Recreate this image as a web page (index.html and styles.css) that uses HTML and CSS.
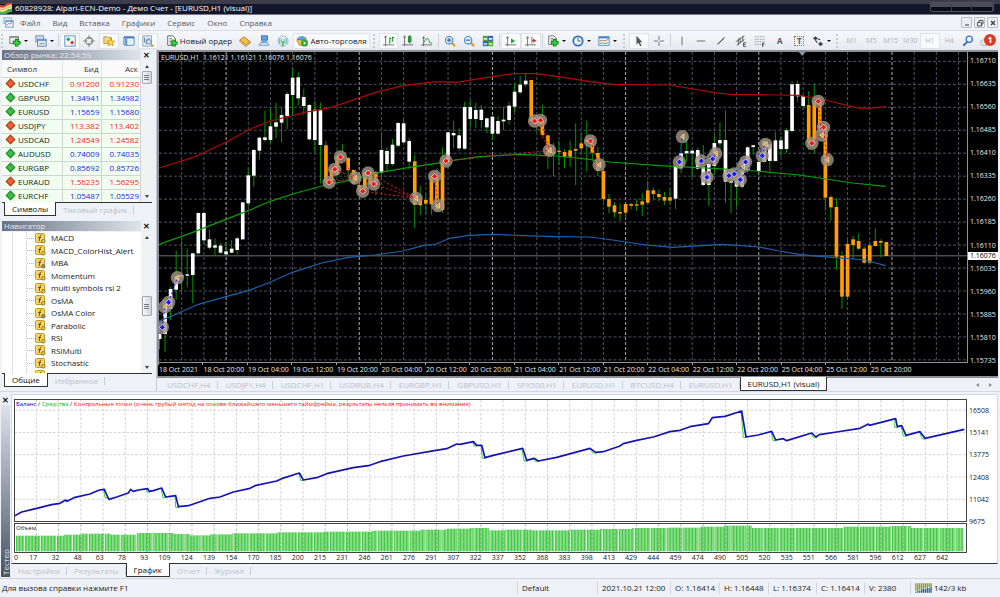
FILE: index.html
```html
<!DOCTYPE html>
<html lang="ru">
<head>
<meta charset="utf-8">
<title>60828928: Alpari-ECN-Demo - Демо Счет - [EURUSD,H1 (visual)]</title>
<link rel="stylesheet" href="styles.css">
</head>
<body>
<header class="titlebar">
  <svg class="logo" viewBox="0 0 12 12"><path d="M0 3Q4 4 6 2T12 1V3Q8 3 6 5T0 6Z" fill="#e33b2e"/><path d="M0 6Q4 7 6 5T12 3V6Q8 6 6 8T0 9Z" fill="#f4c430"/><path d="M0 9Q4 10 6 8T12 6V10Q8 10 6 12H0Z" fill="#4caf3c"/><path d="M0 6Q4 7 6 5T12 3M0 9Q4 10 6 8T12 6" stroke="#fff" fill="none"/></svg>
  <span class="title-text">60828928: Alpari-ECN-Demo - Демо Счет - [EURUSD,H1 (visual)]</span>
  <div class="caption-buttons"><button aria-label="Свернуть"></button><button aria-label="Развернуть"></button><button aria-label="Закрыть"></button></div>
</header>
<nav class="menubar">
  <svg class="menu-icon" viewBox="0 0 12 12"><rect x="1" y="1" width="8" height="6" fill="#e8f2fc" stroke="#7aa9da"/><rect x="3" y="4" width="8" height="7" fill="#fff" stroke="#5b93cf"/><path d="M4 9l2-2 1 1 3-2" stroke="#c55" fill="none"/><path d="M3 5h8" stroke="#5b93cf"/></svg>
  <button>Файл</button><button>Вид</button><button>Вставка</button><button>Графики</button><button>Сервис</button><button>Окно</button><button>Справка</button>
  <div class="mdi"><button aria-label="Свернуть окно"><svg viewBox="0 0 8 8"><path d="M2 6h4" stroke="#555" stroke-width="1.2"/></svg></button><button aria-label="Восстановить окно"><svg viewBox="0 0 8 8"><path d="M3 3V1.5h4V5H5.500M1.500 3.500h4V7h-4z" fill="none" stroke="#555"/></svg></button><button aria-label="Закрыть окно"><svg viewBox="0 0 8 8"><path d="M2 2l4 4M6 2l-4 4" stroke="#444" stroke-width="1.400"/></svg></button></div>
</nav>
<div class="toolbar">
  <i class="grip"></i>
  <div class="group g-52">
    <button class="drop" aria-label="Новый график"><svg viewBox="0 0 14 14"><rect x="1" y="2" width="10" height="8" fill="#f3f8f3" stroke="#666"/><path d="M1 3h10" stroke="#888"/><path d="M3 8l2-2 2 1" stroke="#999" fill="none"/><path d="M9 4.500v9M4.500 9h9" stroke="#0a7a12" stroke-width="4"/><path d="M9 5.500v7M5.500 9h7" stroke="#2fd33a" stroke-width="2.200"/></svg></button>
    <button class="drop" aria-label="Профили"><svg viewBox="0 0 14 14"><rect x="1" y="1" width="9" height="7" fill="#cfe2f6" stroke="#5d83ac"/><rect x="3" y="5" width="10" height="8" fill="#eef5fc" stroke="#4b74a0"/><path d="M3 6.500h10" stroke="#4b86c4"/><path d="M5 10h6" stroke="#9ab" stroke-width="2"/></svg></button>
  </div>
  <i class="sep"></i>
  <div class="group g-98">
    <button class="on" aria-label="Обзор рынка"><svg viewBox="0 0 14 14"><rect x="1" y="1" width="12" height="12" fill="#f5faff" stroke="#4a86c5"/><path d="M5 2.500l2.500 2.500L5 7.500 2.500 5z" fill="#23a839"/><path d="M9.500 6.500L12 9l-2.500 2.500L7 9z" fill="#e03a2a"/></svg></button>
    <button aria-label="Окно данных"><svg viewBox="0 0 14 14"><circle cx="7" cy="7" r="4" fill="none" stroke="#777" stroke-width="1.300"/><path d="M7 0v5M7 9v5M0 7h5M9 7h5" stroke="#777"/></svg></button>
    <button class="on" aria-label="Навигатор"><svg viewBox="0 0 14 14"><path d="M1 2h4l1 1h4v7H1z" fill="#f6d67c" stroke="#b8903a"/><path d="M9 4l1.400 3 3.200.3-2.400 2.200.7 3.200L9 11l-2.900 1.700.7-3.200-2.400-2.200 3.200-.3z" fill="#ffd740" stroke="#b88a14" stroke-width=".8"/></svg></button>
    <button aria-label="Терминал"><svg viewBox="0 0 14 14"><rect x="1" y="2" width="12" height="10" rx="1" fill="#f4f9ff" stroke="#4a80b8"/><path d="M1 3h12" stroke="#4a80b8" stroke-width="2"/><rect x="2" y="4" width="3" height="8" fill="#5f9ad6"/><path d="M6 6h6M6 8h6M6 10h6" stroke="#c9d6e4" stroke-width=".6"/></svg></button>
    <button class="on" aria-label="Тестер стратегий"><svg viewBox="0 0 14 14"><rect x="1" y="1" width="10" height="12" fill="#eaf2fa" stroke="#7b9dc0"/><path d="M3 3v6M5 5v6M7 3v5M9 4v4" stroke="#5a6c80"/><circle cx="8" cy="8" r="2.500" fill="#d8ebfb" stroke="#5b8cc0"/><path d="M10 10l3.500 3.500" stroke="#d3a02a" stroke-width="2"/></svg></button>
  </div>
  <i class="gap"></i>
  <button class="text-btn order"><svg viewBox="0 0 14 14"><path d="M2 1h6l3 3v8H2z" fill="#fbfbfb" stroke="#555"/><path d="M4 4h3M4 6h5M4 8h3" stroke="#777"/><path d="M9.500 5.500v8M5.500 9.500h8" stroke="#0a7a12" stroke-width="4"/><path d="M9.500 6.200v6.600M6.200 9.500h6.600" stroke="#2fd33a" stroke-width="2.200"/></svg>Новый ордер</button>
  <div class="group g-58">
    <button aria-label="Метаредактор"><svg viewBox="0 0 14 14"><path d="M1 6l5-4 7 6-5 4z" fill="#f3c04a" stroke="#a87518"/><path d="M1 6v2l7 5.500 5-4V8l-5 4z" fill="#fff4d0" stroke="#a87518" stroke-width=".8"/></svg></button>
    <button aria-label="MQL5.community"><svg viewBox="0 0 14 14"><rect x="4" y="1" width="7" height="5" fill="#59a5ea" stroke="#346fa8"/><path d="M1 12q1-4 6-4t6 4z" fill="#cfe3f6" stroke="#6b9ac8"/><path d="M4 8h7" stroke="#3d85cc"/></svg></button>
    <button aria-label="Сигналы"><svg viewBox="0 0 14 14"><circle cx="7" cy="7" r="6" fill="#dceef8" stroke="#a6bfcf"/><path d="M4 3.500a5 5 0 000 7M10 3.500a5 5 0 010 7" fill="none" stroke="#6b9ab8" stroke-width="1.200"/><path d="M5.500 5a3 3 0 000 4M8.500 5a3 3 0 010 4" fill="none" stroke="#39a845"/><path d="M7 7v6" stroke="#39a845" stroke-width="1.600"/></svg></button>
  </div>
  <button class="text-btn auto"><svg viewBox="0 0 14 14"><path d="M1 6l6-3 6 3-2 6H4z" fill="#f4c542" stroke="#b98a1a"/><path d="M1 5q5-6 11-1l-5 2z" fill="#5aa9e6" stroke="#3373aa" stroke-width=".7"/><circle cx="10" cy="9.500" r="4" fill="#25a93a"/><path d="M9 7.500l3 2-3 2z" fill="#fff"/></svg>Авто-торговля</button>
  <i class="grip"></i>
  <div class="group g-58">
    <button class="on" aria-label="Бары"><svg viewBox="0 0 14 14"><path d="M3 1v12M0 11.500h13M1.500 3L3 1l1.500 2" fill="none" stroke="#666"/><path d="M8 3v7M8 9H6.500M11 2v6M11 3h2M8 4h1.500" stroke="#239b2f" stroke-width="1.300"/></svg></button>
    <button aria-label="Свечи"><svg viewBox="0 0 14 14"><path d="M3 1v12M0 11.500h13M1.500 3L3 1l1.500 2" fill="none" stroke="#666"/><path d="M9 0v10" stroke="#187b22"/><rect x="7.500" y="2" width="3" height="6" fill="#22b833" stroke="#187b22"/></svg></button>
    <button aria-label="Линия"><svg viewBox="0 0 14 14"><path d="M3 2v11M0 11.500h13M1.500 4L3 2l1.500 2" fill="none" stroke="#666"/><path d="M3 9q4-8 6-3t4 3" fill="none" stroke="#46a350" stroke-width="1.200"/></svg></button>
  </div>
  <i class="sep"></i>
  <div class="group g-58">
    <button aria-label="Увеличить"><svg viewBox="0 0 14 14"><path d="M8 8l5 5" stroke="#d9a62b" stroke-width="2.600"/><circle cx="6" cy="6" r="4.300" fill="#e6f3fd" stroke="#4c86c2" stroke-width="1.300"/><path d="M6 3.500v5M3.500 6h5" stroke="#2c6db3" stroke-width="1.500"/></svg></button>
    <button aria-label="Уменьшить"><svg viewBox="0 0 14 14"><path d="M8 8l5 5" stroke="#d9a62b" stroke-width="2.600"/><circle cx="6" cy="6" r="4.300" fill="#e6f3fd" stroke="#4c86c2" stroke-width="1.300"/><path d="M3.500 6h5" stroke="#2c6db3" stroke-width="1.500"/></svg></button>
    <button aria-label="Окна плиткой"><svg viewBox="0 0 14 14"><rect x="1" y="1" width="6" height="6" fill="#49a828"/><rect x="7" y="1" width="6" height="6" fill="#2e67bd"/><rect x="1" y="7" width="6" height="6" fill="#2e67bd"/><rect x="7" y="7" width="6" height="6" fill="#49a828"/><path d="M2 4.500h4M8 4.500h4M2 10.500h4M8 10.500h4" stroke="#e4f2dc" stroke-width="2"/></svg></button>
  </div>
  <i class="sep"></i>
  <div class="group g-40">
    <button class="on" aria-label="Автопрокрутка"><svg viewBox="0 0 14 14"><path d="M3 2v11M0 11.500h13M1.500 4L3 2l1.500 2" fill="none" stroke="#666"/><path d="M7 4l5 3-5 3z" fill="#23a52f"/></svg></button>
    <button class="on" aria-label="Сдвиг графика"><svg viewBox="0 0 14 14"><path d="M3 2v11M0 11.500h13M1.500 4L3 2l1.500 2M8 2v8" fill="none" stroke="#666"/><path d="M13 6.500H9M11 4.500l-2 2 2 2" fill="none" stroke="#b5452d" stroke-width="1.400"/></svg></button>
  </div>
  <i class="sep"></i>
  <div class="group g-76">
    <button class="drop" aria-label="Индикаторы"><svg viewBox="0 0 14 14"><path d="M2 1h6l3 3v7H2z" fill="#f7f7f7" stroke="#666"/><path d="M4 4h3M4 6h4" stroke="#777"/><path d="M9 4.500v9M4.500 9h9" stroke="#0a7a12" stroke-width="4"/><path d="M9 5.500v7M5.500 9h7" stroke="#2fd33a" stroke-width="2.200"/></svg></button>
    <button class="drop" aria-label="Периоды"><svg viewBox="0 0 14 14"><circle cx="7" cy="7" r="5.500" fill="#e8f3fd" stroke="#2d6fb7" stroke-width="2"/><path d="M7 3.500V7h3" fill="none" stroke="#444"/></svg></button>
    <button class="drop" aria-label="Шаблоны"><svg viewBox="0 0 14 14"><rect x="1" y="2" width="12" height="10" fill="#f7fbff" stroke="#4a80b8"/><path d="M1 3h12" stroke="#4a86c6" stroke-width="2"/><path d="M2 7l3-1 3 1 4-2" fill="none" stroke="#c0503c"/><path d="M2 10l3-1 3 1 4-1" fill="none" stroke="#3b9a49"/></svg></button>
  </div>
  <i class="grip"></i>
  <div class="group g-40">
    <button class="on" aria-label="Курсор"><svg viewBox="0 0 14 14"><path d="M4 1v10l2.300-2 2 4 1.600-.8L8 8.500h3z" fill="#555"/></svg></button>
    <button aria-label="Перекрестие"><svg viewBox="0 0 14 14"><path d="M7 1v5M7 8v5M1 7h5M8 7h5" stroke="#666"/></svg></button>
  </div>
  <i class="sep"></i>
  <div class="group g-137">
    <button aria-label="Вертикальная линия"><svg viewBox="0 0 14 14"><path d="M7 2v10" stroke="#555"/></svg></button>
    <button aria-label="Горизонтальная линия"><svg viewBox="0 0 14 14"><path d="M2 7h10" stroke="#555"/></svg></button>
    <button aria-label="Трендовая линия"><svg viewBox="0 0 14 14"><path d="M3 11l8-8" stroke="#555" stroke-width="1.300"/></svg></button>
    <button aria-label="Канал"><svg viewBox="0 0 14 14"><path d="M1 8L11 1M2 12L11 5M4 4v8M6 3v7M9 1v7" stroke="#555"/><path d="M13 9h-3v4.500h3M10 11h2.500" fill="none" stroke="#444"/></svg></button>
    <button aria-label="Фибоначчи"><svg viewBox="0 0 14 14"><path d="M1 2h12M1 5h12M1 8h12M1 11h7" stroke="#777" stroke-dasharray="1 1"/><path d="M12.500 9.500h-2.500V14M10 11.500h2" fill="none" stroke="#444"/></svg></button>
    <button class="letter">A</button>
    <button class="letter"><span class="boxed">T</span></button>
  </div>
  <button class="drop" aria-label="Стрелки"><svg viewBox="0 0 14 14"><path d="M1 4l3-2.500L7 4 4 6zM7 10.500l3-2.500 3 2.500-3 2.500z" fill="#444"/><path d="M4 6l2 3M7 4.500l2.500 1" stroke="#444" stroke-width="1.400"/></svg></button>
  <i class="grip"></i>
  <div class="group g-117 periods"><button>M1</button><button>M5</button><button>M15</button><button>M30</button><button class="on">H1</button><button>H4</button></div>
  <button class="tail" aria-label="Поиск"><svg viewBox="0 0 14 14"><path d="M6 8l-4.500 4.500" stroke="#3a72cf" stroke-width="2.400"/><circle cx="8.500" cy="5" r="3.600" fill="#f0f6ff" stroke="#3a72cf" stroke-width="1.500"/></svg></button>
  <button class="tail chat" aria-label="Уведомления"><svg viewBox="0 0 14 14"><ellipse cx="5" cy="9" rx="4.500" ry="3.500" fill="#e4e6ea" stroke="#aaaeb5"/></svg><b class="badge">1</b></button>
</div>

<main class="workspace">
  <aside class="side">
    <section class="watch">
      <h2><span>Обзор рынка: 22:54:59</span><button aria-label="Закрыть обзор рынка">✕</button></h2>
      <div class="scroll-row">
        <table>
          <thead><tr><th>Символ</th><th>Бид</th><th>Аск</th></tr></thead>
          <tbody>
            <tr class="down"><td>USDCHF</td><td>0.91200</td><td>0.91230</td></tr>
            <tr class="up"><td>GBPUSD</td><td>1.34941</td><td>1.34982</td></tr>
            <tr class="up"><td>EURUSD</td><td>1.15659</td><td>1.15680</td></tr>
            <tr class="down"><td>USDJPY</td><td>113.382</td><td>113.402</td></tr>
            <tr class="down"><td>USDCAD</td><td>1.24549</td><td>1.24582</td></tr>
            <tr class="up"><td>AUDUSD</td><td>0.74009</td><td>0.74035</td></tr>
            <tr class="up"><td>EURGBP</td><td>0.85692</td><td>0.85726</td></tr>
            <tr class="down"><td>EURAUD</td><td>1.56235</td><td>1.56295</td></tr>
            <tr class="up"><td>EURCHF</td><td>1.05487</td><td>1.05529</td></tr>
          </tbody>
        </table>
        <div class="scrollbar at-top"><i class="arrow-up"></i><i class="thumb"></i><i class="arrow-down"></i></div>
      </div>
      <div class="tabs"><button class="active">Символы</button><button>Тиковый график</button></div>
    </section>
    <section class="navigator">
      <h2><span>Навигатор</span><button aria-label="Закрыть навигатор">✕</button></h2>
      <div class="scroll-row">
        <ul>
          <li>MACD</li><li>MACD_ColorHist_Alert</li><li class="locked">MBA</li><li>Momentum</li><li>multi symbols rsi 2</li><li>OsMA</li><li class="locked">OsMA Color</li><li>Parabolic</li><li>RSI</li><li>RSIMulti</li><li>Stochastic</li><li></li>
        </ul>
        <div class="scrollbar at-middle"><i class="arrow-up"></i><i class="thumb"></i><i class="arrow-down"></i></div>
      </div>
      <div class="tabs"><button class="active">Общие</button><button>Избранное</button></div>
    </section>
  </aside>
  <section class="chart-pane">
    <div class="chart">
      <div class="chart-body">
        <div class="plot">
          <svg id="price" viewBox="0 -24 2427 930" preserveAspectRatio="none" role="img" aria-label="EURUSD,H1"></svg>
          <span class="ohlc">EURUSD,H1&nbsp; 1.16121 1.16121 1.16076 1.16076</span>
        </div>
        <div class="time-axis" id="times"></div>
      </div>
      <div class="price-axis">
        <span>1.16710</span><span>1.16635</span><span>1.16560</span><span>1.16485</span><span>1.16410</span><span>1.16335</span><span>1.16260</span><span>1.16185</span><span>1.16110</span><span>1.16035</span><span>1.15960</span><span>1.15885</span><span>1.15810</span><span>1.15735</span>
        <b class="price-tag">1.16076</b>
      </div>
    </div>
    <div class="tabs chart-tabs"><button>USDCHF,H4</button><button>USDJPY,H4</button><button>USDCHF,H1</button><button>USDRUB,H4</button><button>EURGBP,H1</button><button>GBPUSD,H1</button><button>SPX500,H1</button><button>EURUSD,H1</button><button>BTCUSD,H4</button><button>EURUSD,H1</button><button class="active">EURUSD,H1 (visual)</button><span class="tab-arrows"><i class="arrow-left"></i><i class="arrow-right"></i></span></div>
  </section>
</main>

<section class="tester">
  <div class="tester-strip"><button aria-label="Закрыть тестер">✕</button><span>Тестер</span></div>
  <div class="tester-main">
    <div class="tester-chart">
      <div class="tester-plots">
        <div class="balance">
          <svg id="balance" viewBox="3 27 2853 363" preserveAspectRatio="none" role="img" aria-label="Баланс"></svg>
          <p class="legend"><span class="c-blue">Баланс</span> / <span class="c-green">Средства</span> / <span class="c-red">Контрольные точки (очень грубый метод на основе ближайшего меньшего таймфрейма, результаты нельзя принимать во внимание)</span></p>
        </div>
        <div class="volume">
          <svg id="volume" viewBox="3 400 2853 84" preserveAspectRatio="none" role="img" aria-label="Объем"></svg>
          <p class="legend">Объем</p>
        </div>
        <div class="trade-axis" id="trades"></div>
      </div>
      <div class="money-axis"><span>16508</span><span>15141</span><span>13775</span><span>12408</span><span>11042</span><span>9675</span></div>
    </div>
    <div class="tabs tester-tabs"><button>Настройки</button><button>Результаты</button><button class="active">График</button><button>Отчет</button><button>Журнал</button></div>
  </div>
</section>

<footer class="status">
  <span class="help">Для вызова справки нажмите F1</span><span class="s-80">Default</span><span class="s-73">2021.10.21 12:00</span><span class="s-49">O: 1.16414</span><span class="s-49">H: 1.16448</span><span class="s-48">L: 1.16374</span><span class="s-48">C: 1.16414</span><span class="s-46">V: 2380</span>
  <span class="traffic"><svg viewBox="0 0 18 10"><path d="M1 0v8M3 0v8M5 0v7M7 0v7M9 0v6M11 0v5M13 0v5M15 0v4M17 0v4" stroke="#8a9a2b" stroke-width="1.400"/><path d="M1 10V9M3 10V8M5 10V8M7 10V7M9 10V6M11 10V6M13 10V5M15 10V5M17 10V4" stroke="#23618c" stroke-width="1.400"/></svg>142/3 kb</span>
</footer>
<script src="charts.js"></script>
</body>
</html>
```
FILE: styles.css
```css
* { box-sizing: border-box; }
body {
  margin: 0;
  min-height: 100vh;
  display: flex;
  flex-direction: column;
  background: #eef1f7;
  color: #1a1a1a;
  font-family: "Open Sans", "Noto Sans", sans-serif;
  font-size: 8px;
  line-height: 12px;
  overflow: hidden;
}
button {
  font: inherit;
  color: inherit;
  background: none;
  border: 0;
  padding: 0;
  margin: 0;
  white-space: nowrap;
}
h2, p, ul { margin: 0; padding: 0; font: inherit; }
svg { display: block; }

.titlebar {
  flex: none;
  height: 15px;
  display: flex;
  align-items: center;
  background: linear-gradient(#3c3d4a 0 4px, #14172a 4px 14px, #777b88 14px);
  color: #fff;
}
.logo { width: 12px; height: 12px; }
.title-text { margin-left: 3px; flex: 1; }
.caption-buttons {
  display: flex;
  align-self: flex-start;
  width: 64px;
  height: 10px;
  margin: 2px 6px 0 0;
  border: 1px solid #50535f;
  border-radius: 2px;
  background: linear-gradient(#4a4c5a 0 4px, #0c0e1a 4px);
}
.caption-buttons button { flex: 1; border-right: 1px solid #3c3f50; }

.menubar {
  flex: none;
  height: 15px;
  display: flex;
  align-items: center;
  background: #f0f3f9;
  color: #5a5a5a;
  padding-left: 3px;
}
.menu-icon { width: 11px; height: 11px; margin-right: 6px; }
.menubar > button { margin-right: 12px; }
.mdi { margin-left: auto; display: flex; gap: 2px; padding-right: 2px; }
.mdi button { width: 11px; height: 11px; border: 1px solid #b9bcc3; border-radius: 1px; background: #eceef2; display: grid; place-items: center; }
.mdi svg { width: 8px; height: 8px; }

.toolbar {
  flex: none;
  height: 20px;
  display: flex;
  align-items: center;
  background: linear-gradient(#f6f8fb, #e6e9f0);
  border-top: 1px solid #d9dce3;
}
.toolbar svg { width: 12px; height: 12px; flex: none; }
.toolbar button { height: 16px; display: flex; align-items: center; justify-content: center; border: 1px solid transparent; }
.toolbar .on, .toolbar .auto { background: #f8fafc; border-color: #dfe2e8; }
.group { display: flex; flex: none; }
.group button { flex: 1 1 0; min-width: 0; }
.g-40 { width: 40px; }
.g-52 { width: 52px; }
.g-58 { width: 58px; }
.g-76 { width: 76px; }
.g-98 { width: 98px; }
.g-117 { width: 117px; }
.g-137 { width: 137px; }
.grip { flex: none; width: 3px; height: 14px; margin: 0 3px; border-left: 2px dotted #c6cad2; }
.toolbar > .grip:first-child { margin: 0 1px; }
.sep { flex: none; width: 1px; height: 13px; margin: 0 1px; background: #cdd1d9; }
.gap { flex: none; width: 5px; }
.toolbar .drop { gap: 3px; width: 24px; }
.drop::after { content: ""; border: 2px solid transparent; border-top-color: #111; border-bottom: 0; }
.toolbar .text-btn { gap: 2px; }
.toolbar .order { width: 72px; }
.toolbar .auto { width: 77px; }
.toolbar .letter { font-weight: 700; color: #555; }
.boxed { width: 10px; line-height: 8px; border: 1px dotted #777; }
.periods { color: #b0b3ba; font-size: 7px; }
.toolbar .tail { width: 18px; flex: none; }
.toolbar .chat { position: relative; }
.badge {
  position: absolute;
  top: 0;
  left: 6px;
  width: 12px;
  height: 12px;
  border-radius: 6px;
  background: #dd3a25;
  color: #fff;
  font-size: 9px;
  line-height: 12px;
  text-align: center;
}

.workspace { flex: 1; display: flex; min-height: 341px; }
.side { flex: none; width: 157px; padding: 0 4px 0 2px; display: flex; flex-direction: column; gap: 5px; border-right: 1px solid #c5c9d1; }
.side h2 { display: flex; height: 10px; line-height: 10px; color: #e3e6ec; margin-bottom: 1px; }
.side h2 span { flex: 1; padding-left: 2px; background: linear-gradient(90deg, #6a7384, #dfe4ec); }
.side h2 button { width: 11px; color: #111; font-weight: 700; line-height: 10px; }
.scroll-row { display: flex; background: #fff; border-bottom: 1px solid #333; overflow: hidden; }
.watch .scroll-row { height: 142px; }
.navigator .scroll-row { height: 142px; }

table { flex: 1; border-collapse: collapse; table-layout: fixed; }
th { height: 16px; padding: 0 2px; font-weight: 400; text-align: right; background: #fafafa; color: #333; border-right: 1px solid #e3e5e8; border-bottom: 1px solid #cfd4d0; }
th:first-child { width: 60px; text-align: left; padding-left: 5px; }
th:nth-child(2) { width: 39px; }
td { height: 14px; padding: 0 1px; text-align: right; background: #f0fff0; border-right: 1px solid #cfd4d0; border-bottom: 1px solid #cfd4d0; }
tr td:first-child { text-align: left; white-space: nowrap; color: #222; }
td:first-child::before { content: ""; display: inline-block; width: 5px; height: 5px; margin: 0 4px 0 4px; transform: rotate(45deg); vertical-align: 0; }
.up td { color: #2323ee; }
.down td { color: #f22; }
.up td:first-child::before { background: #3dbb4a; border: 1px solid #23862e; }
.down td:first-child::before { background: #e8623a; border: 1px solid #b03d1c; }

.scrollbar { flex: none; width: 11px; display: flex; flex-direction: column; align-items: center; background: #f1f2f4; padding: 4px 0; }
.thumb { width: 10px; border: 1px solid #a5a8ae; border-radius: 1px; background: repeating-linear-gradient(#777 0 1px, transparent 1px 2px) center / 5px 5px no-repeat, linear-gradient(90deg, #f6f6f7, #d2d4d8); }
.at-top .thumb { height: 13px; margin: 3px 0 auto; }
.at-middle .thumb { height: 20px; margin: 57px 0 auto; }
.arrow-up, .arrow-down, .arrow-left, .arrow-right { border: 3px solid transparent; }
.arrow-up { border-bottom-color: #444; border-width: 0 2px 3px; }
.arrow-down { border-top-color: #444; border-width: 3px 2px 0; }
.arrow-left { border-right-color: #8b8f98; border-width: 2px 3px 2px 0; }
.arrow-right { border-left-color: #8b8f98; border-width: 2px 0 2px 3px; }

.navigator ul { flex: 1; list-style: none; background: repeating-linear-gradient(#c8c8c8 0 1px, transparent 1px 2px) 10px 0 / 1px 100% no-repeat, repeating-linear-gradient(#c8c8c8 0 1px, transparent 1px 2px) 24px 0 / 1px 100% no-repeat; }
.navigator li { display: flex; align-items: center; height: 12px; padding-left: 25px; line-height: 12px; }
.navigator li:nth-child(even) { height: 13px; }
.navigator li::before { content: ""; width: 7px; border-top: 1px dotted #bbb; margin-right: 1px; }
.navigator li svg { width: 11px; height: 11px; margin-right: 5px; }

.tabs { display: flex; align-items: stretch; height: 13px; color: #bcc0ca; }
.tabs button { position: relative; }
.tabs button:not(.active)::after { content: ""; position: absolute; right: 0; top: 3px; height: 8px; border-right: 1px solid #c9cdd5; }
.tabs .active { color: #111; background: #fff; border: 1px solid #333; border-top: 0; margin-top: -1px; }
.side .tabs { padding-left: 2px; }
.side .tabs button { padding: 0 7px; }

.chart-pane { flex: 1; min-width: 0; display: flex; flex-direction: column; padding-right: 2px; }
.chart { display: flex; background: #000; border: solid #8d8f94; border-width: 2px 0 2px 1px; color: #e8e8e8; font-size: 7px; line-height: 9px; height: 328px; }
.chart-body { flex: 1; min-width: 0; display: flex; flex-direction: column; }
.plot { position: relative; border: solid #909296; border-width: 0 1px 1px 1px; }
.plot svg { width: 100%; height: 310px; }
.ohlc { position: absolute; left: 2px; top: 1px; white-space: nowrap; }
.time-axis { display: flex; white-space: nowrap; }
.time-axis span { width: 5.493%; flex: none; border-left: 1px solid #aaa; height: 2px; padding-top: 2px; }
.price-axis { flex: none; width: 30px; height: 313px; padding: 4px 0 0 2px; position: relative; display: flex; flex-direction: column; justify-content: space-between; }
.price-tag { position: absolute; left: 0; right: 0; top: 200px; height: 8px; line-height: 8px; padding-left: 2px; background: #fff; color: #000; font-weight: 400; }
.chart-tabs { padding-left: 2px; }
.chart-tabs button { padding: 0 7px 0 8px; }
.chart-tabs .active { padding: 0 7px; }
.tab-arrows { margin-left: auto; display: flex; align-items: center; gap: 10px; padding-right: 6px; }

.tester { flex: none; height: 188px; display: flex; padding: 2px 2px 0 1px; border-top: 1px solid #d5d8df; border-bottom: 1px solid #cfd3da; }
.tester-strip { flex: none; width: 9px; display: flex; flex-direction: column; margin-right: 1px; }
.tester-strip button { height: 11px; line-height: 11px; font-weight: 700; color: #111; }
.tester-strip span { flex: 1; margin-bottom: 1px; writing-mode: vertical-rl; rotate: 180deg; text-align: left; line-height: 9px; padding-top: 2px; color: #dfe2e8; background: linear-gradient(#4a5365, #dde2ea); }
.tester-main { flex: 1; min-width: 0; }
.tester-chart { display: flex; height: 170px; background: #fff; border: 1px solid #d5d8df; border-bottom: 1px solid #333; padding: 4px 0 0 2px; font-size: 7px; line-height: 9px; }
.tester-plots { flex: 1; min-width: 0; }
.balance, .volume { position: relative; border: 1px solid #444; }
.balance svg { width: 100%; height: 121px; }
.volume { margin-top: 1px; }
.volume svg { width: 100%; height: 28px; }
.legend { position: absolute; left: 1px; top: 0; white-space: nowrap; font-size: 6px; color: #222; }
.c-blue { color: #0000c0; }
.c-green { color: #0ab80a; }
.c-red { color: #f11; }
.trade-axis { display: flex; }
.trade-axis span { flex: none; width: 2.332%; text-align: right; }
.trade-axis span:first-child { width: 1px; }
.money-axis { flex: none; width: 30px; height: 127px; padding: 7px 0 0 2px; display: flex; flex-direction: column; justify-content: space-between; }
.tester-tabs button { padding: 0 7px; }

.status { flex: none; height: 18px; display: flex; align-items: center; padding: 0 2px; }
.status span { flex: none; border-left: 1px solid #d3d6dd; padding-left: 4px; white-space: nowrap; }
.status .help { flex: 1; border: 0; padding: 0; }
.s-80 { width: 80px; }
.s-73 { width: 73px; }
.s-49 { width: 49px; }
.s-48 { width: 48px; }
.s-46 { width: 46px; }
.status .traffic { display: flex; align-items: center; gap: 2px; width: 88px; border-left: 1px solid #d3d6dd; }
.traffic svg { width: 17px; height: 10px; }
```
FILE: charts.js
```javascript
const NS = "http://www.w3.org/2000/svg";

function add(svg, tag, attrs) {
  const el = document.createElementNS(NS, tag);
  for (const k in attrs) el.setAttribute(k, attrs[k]);
  svg.appendChild(el);
  return el;
}

// Indicator icons in the navigator tree
document.querySelectorAll(".navigator li").forEach((li) => {
  const svg = document.createElementNS(NS, "svg");
  svg.setAttribute("viewBox", "0 0 11 11");
  const gear = li.classList.contains("locked") ? "#888" : "#f3c63a";
  add(svg, "rect", { x: 0.5, y: 0.5, width: 9, height: 9, rx: 1, fill: "#f5d469", stroke: "#c39a2c" });
  add(svg, "path", { d: "M6.500 2Q5 2 4.800 4L4.200 8M3.200 4.500H6", fill: "none", stroke: "#6b5210", "stroke-width": 1 });
  add(svg, "circle", { cx: 8.3, cy: 8.3, r: 1.8, fill: gear, stroke: "#7a6a30", "stroke-width": 0.8 });
  li.prepend(svg);
});

// Candles: high, body top, body bottom, low
const candles = [
  [795,822,837,868],[730,740,822,875],[680,687,747,780],[572,648,689,720],[535,645,650,695],[565,643,647,682],[578,580,645,730],[457,459,580,584],[455,459,541,552],[510,538,563,568],
  [535,556,563,585],[550,557,578,582],[545,574,583,588],[540,566,578,580],[530,535,570,583],[427,427,538,538],[323,346,430,440],[267,270,347,380],[230,233,272,300],[153,232,240,245],
  [147,199,240,250],[128,187,200,235],[142,165,188,248],[95,102,168,207],[23,53,105,165],[37,52,115,137],[86,111,138,165],[132,135,238,241],[123,149,240,277],[128,151,255,370],
  [243,256,365,370],[322,330,370,375],[270,290,345,350],[252,288,294,296],[290,294,331,355],[328,330,371,375],[345,375,392,398],[330,338,388,398],[325,335,372,375],[332,336,376,405],
  [218,270,338,360],[262,273,312,335],[237,254,312,317],[186,189,257,263],[180,190,247,250],[234,243,305,327],[285,304,435,505],[378,417,436,465],[400,420,431,463],[343,348,433,465],
  [325,350,448,455],[262,306,450,458],[215,217,306,325],[182,219,226,265],[205,226,265,272],[125,141,266,270],[120,141,177,200],[128,150,177,205],[135,149,180,205],[172,175,202,220],
  [168,170,221,240],[168,183,221,224],[140,179,184,210],[125,137,180,193],[70,95,140,157],[48,74,97,102],[40,62,73,80],[60,60,183,183],[165,180,188,215],[135,180,225,230],
  [224,226,285,327],[248,275,283,348],[243,272,275,315],[268,276,291,325],[243,271,290,320],[190,267,272,375],[220,250,265,283],[182,240,247,335],[225,250,278,305],[260,279,333,348],
  [330,333,417,425],[402,417,440,460],[427,436,457,473],[430,456,461,483],[430,432,458,475],[429,432,437,448],[418,433,437,453],[398,424,434,468],[363,391,428,433],[383,391,402,422],
  [388,402,411,425],[396,411,422,435],[387,412,422,430],[318,320,416,447],[250,280,325,340],[230,273,280,305],[270,272,280,352],[262,270,326,330],[255,321,375,378],[290,312,375,438],
  [225,249,318,345],[188,240,250,275],[150,240,365,428],[345,363,368,460],[330,362,380,440],[310,330,380,385],[258,262,330,338],[254,256,261,285],[290,306,333,335],[235,243,306,308],
  [250,253,303,335],[215,241,303,305],[228,241,267,290],[205,211,267,278],[63,73,213,217],[62,72,109,125],[105,108,138,150],[93,135,247,270],[70,125,248,280],[105,128,205,240],
  [185,202,413,452],[406,411,442,482],[415,441,590,630],[573,588,710,747],[536,552,710,717],[528,538,555,600],[520,543,566,570],[560,566,608,613],[545,556,608,612],[505,543,558,560],
  [538,543,548,592],[546,546,588,588]
];
const isFalling = (i) => (i >= 30 && i <= 39) || (i >= 46 && i <= 51) || (i >= 67 && i <= 92) || i >= 117;

const averages = {
  "#b00808": "0,324 101,293 201,247 268,210 334,183 401,167 434,158 518,142 648,98 733,77 833,65 893,67 1001,50 1063,41 1133,41 1213,52 1293,65 1363,73 1533,75 1663,97 1713,103 1863,105 1923,106 2013,123 2093,143 2133,145 2183,140",
  "#05a005": "0,553 101,517 201,478 268,452 334,424 401,402 501,375 588,358 663,337 753,322 833,310 883,301 963,290 1083,283 1193,288 1283,297 1353,306 1503,317 1663,325 1793,333 1923,345 2003,357 2083,369 2183,379",
  "#1c62b0": "0,783 34,770 118,733 201,710 268,692 334,667 401,637 488,609 568,592 648,585 733,573 793,557 833,552 873,535 933,526 1003,523 1093,527 1193,530 1293,531 1363,540 1463,555 1543,562 1693,553 1803,561 1863,573 1923,583 1993,590 2123,600 2153,609 2183,617"
};

const trades = [
  [10,802,"b"],[18,740,"y"],[29,727,"b"],[55,653,"y"],[511,367,"r"],[528,328,"r"],[545,291,"r"],[589,354,"y"],[612,394,"r"],[628,339,"r"],[645,372,"r"],
  [772,415,"y"],[828,349,"r"],[838,437,"y"],[862,303,"r"],[1128,183,"r"],[1146,181,"r"],[1173,271,"y"],
  [1296,243,"r"],[1322,314,"y"],[1572,230,"y"],[1563,306,"b"],[1629,303,"b"],[1646,352,"b"],[1663,297,"b"],[1672,281,"y"],[1712,347,"b"],[1728,342,"b"],[1746,359,"b"],[1754,320,"y"],[1762,306,"b"],[1812,287,"b"],[1822,253,"y"],
  [1980,124,"r"],[1961,250,"r"],[1990,225,"y"],[1996,202,"r"],[2007,299,"y"]
];
const links = [
  [511,367,589,354,"r"],[528,328,589,354,"r"],[545,291,589,354,"r"],[612,394,772,415,"r"],[628,339,772,415,"r"],[645,372,772,415,"r"],[828,349,838,437,"r"],[862,303,1173,271,"r"],
  [1128,183,1173,271,"r"],[1146,181,1173,271,"r"],[1296,243,1322,314,"r"],[1980,124,1990,225,"r"],[1996,202,2007,299,"r"],[1961,250,1990,225,"r"],
  [10,802,18,740,"b"],[29,727,55,653,"b"],[1563,306,1572,230,"b"],[1629,303,1672,281,"b"],[1646,352,1672,281,"b"],[1712,347,1754,320,"b"],[1746,359,1822,253,"b"],[1812,287,1822,253,"b"]
];

const price = document.getElementById("price");
for (let k = 1; k <= 36; k++) {
  const x = 1.5 + k * 66.67;
  add(price, "path", { d: `M${x} -24V906`, stroke: k % 6 === 3 ? "#a9b0b6" : "#4b5560", "stroke-width": 3, "stroke-dasharray": "9 6" });
}
for (let k = 0; k < 14; k++) {
  add(price, "path", { d: `M0 ${4 + k * 68.9}H2427`, stroke: "#4b5560", "stroke-width": 3, "stroke-dasharray": "9 6" });
}
add(price, "path", { d: "M0 587.500H2427", stroke: "#6a737b", "stroke-width": 3 });
candles.forEach(([high, top, bottom, low], i) => {
  const x = 1.5 + i * 16.667;
  add(price, "path", { d: `M${x} ${high}V${low}`, stroke: "#079307", "stroke-width": 3 });
  add(price, "rect", { x: x - 5.5, y: top, width: 11, height: Math.max(4, bottom - top), fill: isFalling(i) ? "#ff9f05" : "#fff" });
});
for (const color in averages) {
  add(price, "polyline", { points: averages[color], fill: "none", stroke: color, "stroke-width": 3.5 });
}
trades.forEach(([x, y]) => add(price, "circle", { cx: x, cy: y, r: 20, fill: "#a09184", "fill-opacity": 0.82 }));
links.forEach(([x1, y1, x2, y2, t]) => add(price, "line", { x1, y1, x2, y2, stroke: t === "r" ? "#d01818" : "#2020e0", "stroke-width": 3, "stroke-dasharray": "7 6" }));
trades.forEach(([x, y, t]) => {
  if (t === "y") {
    add(price, "path", { d: `M${x + 5} ${y - 8}L${x - 5} ${y}L${x + 5} ${y + 8}Z`, fill: "#d99a2a", stroke: "#fff0c8", "stroke-width": 2 });
  } else {
    add(price, "path", { d: `M${x - 9} ${y}L${x} ${y - 9}L${x + 9} ${y}L${x} ${y + 9}Z`, fill: t === "r" ? "#f01414" : "#1616f0", stroke: "#fff", "stroke-width": 2 });
  }
});
add(price, "path", { d: "M1922 -24h20l-10 12z", fill: "#7f95a8" });

const days = ["18 Oct 2021", "18 Oct 20:00"];
["19", "20", "21", "22"].forEach((d) => ["04", "12", "20"].forEach((h) => days.push(`${d} Oct ${h}:00`)));
["04", "12", "20"].forEach((h) => days.push(`25 Oct ${h}:00`));
document.getElementById("times").innerHTML = days.map((d) => `<span>${d}</span>`).join("");

const balanceLine = [
  [1,375],[23,363],[68,352],[113,341],[138,337],[155,327],[159,331],[183,319],[228,309],[256,297],[271,295],[281,318],[285,325],[308,318],[343,306],[350,295],[358,301],[373,297],[401,293],[406,301],[418,299],[443,291],[455,318],[485,314],[493,347],[523,344],[558,332],[588,322],[618,318],[658,303],[708,292],[723,284],[788,270],[803,263],[856,246],[868,267],[908,260],[938,248],[978,239],
  [1018,230],[1063,224],[1098,212],[1168,195],[1248,181],[1298,173],[1328,159],[1338,160],[1378,152],[1388,163],[1403,163],[1413,200],[1438,193],[1526,172],[1538,208],[1560,202],[1573,210],[1628,199],[1728,172],[1745,184],[1768,182],[1818,165],[1828,158],[1868,148],[1918,138],[1968,122],
  [1998,118],[2028,107],[2083,98],[2095,80],[2133,76],[2183,60],[2196,138],[2233,132],[2273,121],[2285,147],[2308,143],[2318,149],[2393,126],[2406,138],[2416,131],[2468,123],[2538,112],[2563,99],[2566,103],[2645,83],[2650,107],[2663,104],[2676,133],[2718,122],[2733,142],[2851,115]
];
const balance = document.getElementById("balance");
const volume = document.getElementById("volume");
for (let k = 1; k < 43; k++) {
  add(balance, "path", { d: `M${k * 66.67 + 0.5} 27V390`, stroke: "#d3d3d3", "stroke-width": 3, "stroke-dasharray": "8 5" });
}
for (let k = 0; k < 5; k++) {
  add(balance, "path", { d: `M0 ${57.5 + k * 66.8}H2856`, stroke: "#d3d3d3", "stroke-width": 3, "stroke-dasharray": "8 5" });
}
// Equity dips slightly ahead of the balance on every loss
balanceLine.forEach(([x, y], i) => {
  const next = balanceLine[i + 1];
  if (next && next[1] > y + 7) {
    add(balance, "path", { d: `M${x - 2} ${y}L${next[0] - 8} ${next[1] + 2}H${next[0] + 3}`, fill: "none", stroke: "#3fcf3f", "stroke-width": 3 });
  }
});
add(balance, "polyline", { points: balanceLine.join(" "), fill: "none", stroke: "#1414b4", "stroke-width": 5, "stroke-linejoin": "round" });

const volumeTop = [[148,435],[200,432],[288,429],[368,432],[478,427],[523,430],[588,434],[653,431],[788,428],[928,425],[1073,423],[1218,420],[1298,417],[1368,414],[1425,412],[1473,419],[1550,417],[1668,419],[1755,417],[1850,415],[1960,412],[2060,411],[2128,408],[2213,405],[2488,412],[2628,408],[2688,406],[2853,412]];
for (let i = 0; i < 649; i++) {
  const x = 6 + i * 4.38;
  const top = volumeTop.find((v) => x <= v[0])[1];
  add(volume, "rect", { x, y: top, width: i % 11 === 5 ? 2 : 3.6, height: 482 - top, fill: "#45c945" });
}
for (let k = 1; k < 43; k++) {
  add(volume, "path", { d: `M${k * 66.67 + 0.5} 400V484`, stroke: "#4d8a4d", "stroke-opacity": 0.45, "stroke-width": 3, "stroke-dasharray": "8 5" });
}
const ticks = [0,17,32,48,63,78,93,109,124,139,154,170,185,200,215,231,246,261,276,291,307,322,337,352,368,383,398,413,429,444,459,474,490,505,520,535,551,566,581,596,612,627,642];
document.getElementById("trades").innerHTML = ticks.map((t) => `<span>${t}</span>`).join("");
```
